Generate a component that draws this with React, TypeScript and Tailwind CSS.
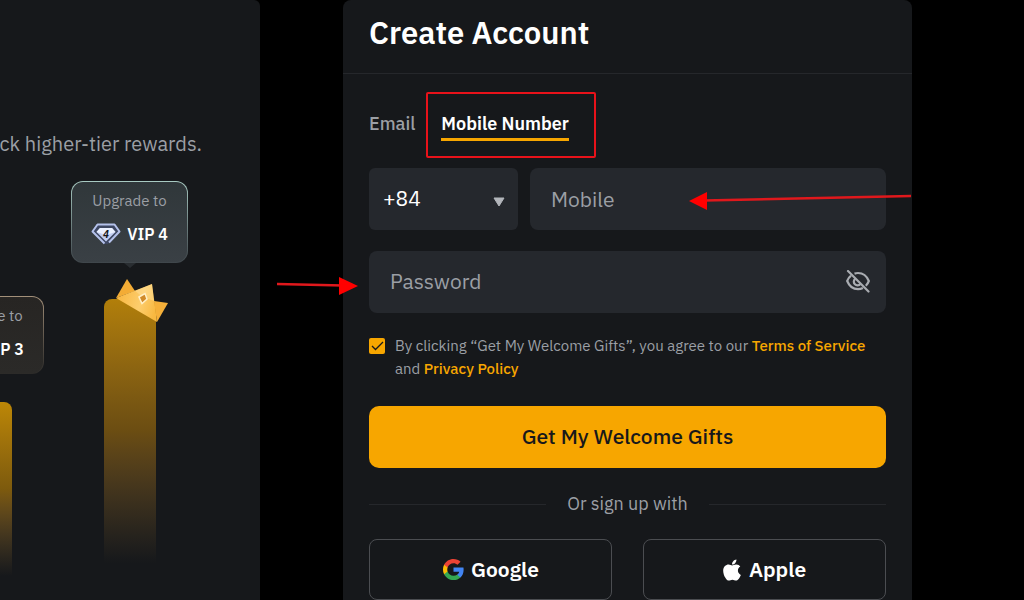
import { useState } from "react";
import { FaApple } from "react-icons/fa";

function VipBadge({ level }: { level: number }) {
  return (
    <svg viewBox="0 0 30 22" className="h-[22px] w-[30px] shrink-0" aria-hidden="true">
      <path d="M6 1H24L29 8.5L17 21L13 21L1 8.5Z" fill="#3d4762" />
      <path d="M13.500 20.500L1.500 8.500L6.500 1.500H23.500L28.500 8.500L18 19.500" fill="none" stroke="#b4c1ea" strokeWidth="2" strokeLinejoin="round" />
      <path d="M9 5H21L24.500 9L15 18.500L5.500 9Z" fill="#c3cff2" />
      <path d="M9 5H21L24.500 9L15 12L5.500 9Z" fill="#eaf0ff" />
      <text x="15" y="14.500" textAnchor="middle" fontSize="10" fontWeight="700" fontStyle="italic" fill="#15171c">
        {level}
      </text>
    </svg>
  );
}

function Crown() {
  return (
    <svg viewBox="0 0 52 43" className="absolute -top-5 left-3 h-[43px] w-[52px]" aria-hidden="true">
      <defs>
        <linearGradient id="crown-body" x1="0" y1="0.3" x2="1" y2="0.6">
          <stop offset="0" stopColor="#f8b63f" />
          <stop offset="0.6" stopColor="#fdcd6c" />
          <stop offset="1" stopColor="#f8b840" />
        </linearGradient>
      </defs>
      <path d="M0 19L11 0L19 12Z" fill="#f3ac35" />
      <path d="M38 22L52 24L41 43Z" fill="#f5b03a" />
      <path d="M0 19L36 5L41 43Z" fill="url(#crown-body)" />
      <path d="M19 12L36 5L38 22L27 18Z" fill="#ffe09a" opacity="0.500" />
      <path d="M23 18L29 14.500L31 20L26 24.500Z" fill="#d18a2a" stroke="#fff0c8" strokeWidth="1.500" />
    </svg>
  );
}

function GoogleLogo() {
  return (
    <svg viewBox="0 0 24 24" className="size-[23px]" aria-hidden="true">
      <path fill="#4285F4" d="M22.56 12.25c0-.78-.07-1.53-.2-2.25H12v4.26h5.92c-.26 1.37-1.04 2.53-2.21 3.31v2.77h3.57c2.08-1.92 3.28-4.74 3.28-8.09z" />
      <path fill="#34A853" d="M12 23c2.97 0 5.46-.98 7.28-2.66l-3.57-2.77c-.98.66-2.23 1.06-3.71 1.06-2.86 0-5.29-1.93-6.16-4.53H2.18v2.84C3.99 20.53 7.7 23 12 23z" />
      <path fill="#FBBC05" d="M5.84 14.09c-.22-.66-.35-1.36-.35-2.09s.13-1.43.35-2.09V7.07H2.18C1.43 8.55 1 10.22 1 12s.43 3.45 1.18 4.93l3.66-2.84z" />
      <path fill="#EA4335" d="M12 5.38c1.62 0 3.06.56 4.21 1.64l3.15-3.15C17.45 2.09 14.97 1 12 1 7.7 1 3.99 3.47 2.18 7.07l3.66 2.84c.87-2.6 3.3-4.53 6.16-4.53z" />
    </svg>
  );
}

function EyeOff() {
  return (
    <svg viewBox="0 0 24 24" className="size-6" fill="none" stroke="currentColor" strokeWidth="2.200" aria-hidden="true">
      <path d="M8.500 3.600C9.600 3.200 10.800 3 12 3C17 3 20.800 6 22.800 11C22.100 12.900 21.100 14.500 19.800 15.800" />
      <path d="M5 5.600C3.300 6.900 2 8.800 1.200 11C3.200 16 7 19.200 12 19.200C13.800 19.200 15.400 18.800 16.900 18" />
      <path d="M9.200 8.800A3.700 3.700 0 1 0 14.400 14" />
      <path d="M2 1L22.500 21.500" strokeLinecap="round" />
    </svg>
  );
}

function TierColumn({ level, tall }: { level: number; tall?: boolean }) {
  return (
    <div className={tall ? "flex w-[117px] shrink-0 flex-col items-center" : "mt-[115px] flex w-[117px] shrink-0 flex-col items-center"}>
      <div
        className={
          tall
            ? "relative w-full rounded-xl bg-linear-to-b from-[#a9cbc3] to-[#3f464b] p-px"
            : "relative w-full rounded-xl bg-linear-to-b from-[#a3907a] to-[#2b2a28] p-px"
        }
      >
        <div
          className={
            tall
              ? "flex h-20 flex-col items-center gap-[9px] rounded-[11px] bg-linear-to-b from-[#30373a] to-[#3a4045] pt-[7px]"
              : "flex h-[76px] flex-col items-center gap-[9px] rounded-[11px] bg-linear-to-b from-[#272523] to-[#2b2a28] pt-[7px]"
          }
        >
          <span className="text-[15px] leading-6 text-[#9b9fa5]">Upgrade to</span>
          <span className="flex items-center gap-1.5 text-[16px] leading-6 font-semibold whitespace-nowrap text-white">
            <VipBadge level={level} />
            VIP {level}
          </span>
        </div>
        {tall && <span className="absolute top-full left-1/2 -ml-1.5 border-x-6 border-t-5 border-x-transparent border-t-[#292d31]" />}
      </div>
      <div
        className={
          tall
            ? "relative mt-9 h-[264px] w-[52px] rounded-t-lg bg-linear-to-b from-[#b27f0a] via-[#6b4d12] to-[#16181b]"
            : "relative mt-7 h-[174px] w-[52px] rounded-t-lg bg-linear-to-b from-[#bd8706] via-[#7d5a0d] to-[#16181b]"
        }
      >
        {tall && <Crown />}
      </div>
    </div>
  );
}

export default function App() {
  const [showPassword, setShowPassword] = useState(false);

  return (
    <main className="grid min-h-screen grid-cols-[260fr_569fr] gap-[83px] overflow-hidden bg-black pr-28 font-['IBM_Plex_Sans','Noto_Sans',sans-serif] text-white">
      <section className="min-w-0 overflow-hidden rounded-tr-md bg-[#16181b]">
        <p className="mt-32 mr-[58px] flex justify-end text-[20px] leading-8 whitespace-nowrap text-[#9b9fa5]">
          ck higher-tier rewards.
        </p>
        <div className="mt-[21px] mr-[72px] flex items-start justify-end gap-[27px]">
          <TierColumn level={3} />
          <TierColumn level={4} tall />
        </div>
      </section>

      <section className="relative min-w-0 rounded-t-lg bg-[#16181b]">
        <header className="border-b border-[#25272b] px-[26px] pt-3 pb-5">
          <h1 className="text-[31px] leading-[41px] font-semibold">Create Account</h1>
        </header>

        <form className="px-[26px] pt-9" onSubmit={(e) => e.preventDefault()}>
          <div className="flex gap-[26px] text-[18px] leading-7 font-semibold">
            <button type="button" className="pb-[3px] font-medium text-[#9b9fa5]">Email</button>
            <button type="button" className="relative border-b-3 border-[#f7a600]">
              Mobile Number
              <span className="absolute -top-[18px] -right-[27px] -bottom-5 -left-[15px] rounded-xs border-2 border-[#e8121a]" />
            </button>
          </div>

          <div className="mt-[27px] flex gap-3">
            <div className="relative w-[149px] shrink-0">
              <select aria-label="Country code" className="h-[62px] w-full appearance-none rounded-md bg-[#25282d] px-[14px] text-[21px] text-white">
                <option>+84</option>
              </select>
              <svg viewBox="0 0 12 10" className="pointer-events-none absolute top-[29px] right-[13px] h-[10px] w-3" aria-hidden="true">
                <path d="M1 1H11L6 9Z" fill="#b3b6bb" stroke="#b3b6bb" strokeLinejoin="round" />
              </svg>
            </div>
            <input type="tel" aria-label="Mobile" placeholder="Mobile" className="h-[62px] min-w-0 flex-1 rounded-lg bg-[#25282d] px-[21px] text-[21px] placeholder:text-[#9b9fa5]" />
          </div>

          <div className="mt-[21px] flex h-[62px] items-center rounded-lg bg-[#25282d] pr-4 pl-[21px]">
            <input
              type={showPassword ? "text" : "password"}
              aria-label="Password"
              placeholder="Password"
              className="min-w-0 flex-1 bg-transparent text-[21px] placeholder:text-[#9b9fa5]"
            />
            <button type="button" aria-label="Show password" className="text-[#a9acb1]" onClick={() => setShowPassword(!showPassword)}>
              <EyeOff />
            </button>
          </div>

          <div className="mt-[21px] flex gap-[10px] text-[15px] leading-[23px] text-[#9b9fa5]">
            <span className="relative mt-1 size-4 shrink-0">
              <input id="agree" type="checkbox" defaultChecked className="peer block size-4 appearance-none rounded-xs bg-[#3a3d42] checked:bg-[#f7a600]" />
              <svg viewBox="0 0 16 16" className="pointer-events-none absolute inset-0 hidden size-4 peer-checked:block" fill="none" stroke="#17181b" aria-hidden="true">
                <path d="M3 8L6.500 11.500L14 4" strokeWidth="1.300" />
              </svg>
            </span>
            <label htmlFor="agree">
              By clicking “Get My Welcome Gifts”, you agree to our{" "}
              <a href="#terms" className="font-medium text-[#f7a600]">Terms of Service</a>
              <br />
              and <a href="#privacy" className="font-medium text-[#f7a600]">Privacy Policy</a>
            </label>
          </div>

          <button type="submit" className="mt-[26px] h-[62px] w-full rounded-[10px] bg-[#f7a600] text-[21px] font-medium text-[#17181b]">
            Get My Welcome Gifts
          </button>

          <div className="mt-6 flex items-center gap-[21px] text-[18px] leading-6 text-[#9b9fa5]">
            <span className="h-px flex-1 bg-[#25272b]" />
            Or sign up with
            <span className="h-px flex-1 bg-[#25272b]" />
          </div>

          <div className="mt-[23px] grid grid-cols-2 gap-[31px] text-[21px] font-semibold">
            <button type="button" className="flex h-[61px] items-center justify-center gap-1.5 rounded-lg border border-[#4b4d51]">
              <GoogleLogo />
              Google
            </button>
            <button type="button" className="flex h-[61px] items-center justify-center gap-2 rounded-lg border border-[#4b4d51]">
              <FaApple className="h-6 w-[18px]" />
              Apple
            </button>
          </div>
        </form>

        <svg viewBox="0 0 222 18" className="pointer-events-none absolute top-[192px] left-[346px] h-[18px] w-[222px]" aria-hidden="true">
          <path d="M15 8.500L222 4" stroke="#e0181c" strokeWidth="2.500" />
          <path d="M0 9L18 0V18Z" fill="#ff0000" />
        </svg>
        <svg viewBox="0 0 81 18" className="pointer-events-none absolute top-[277px] -left-[66px] h-[18px] w-[81px]" aria-hidden="true">
          <path d="M0 7L66 8.500" stroke="#e0181c" strokeWidth="2.500" />
          <path d="M81 9L62 0V18Z" fill="#ff0000" />
        </svg>
      </section>
    </main>
  );
}
